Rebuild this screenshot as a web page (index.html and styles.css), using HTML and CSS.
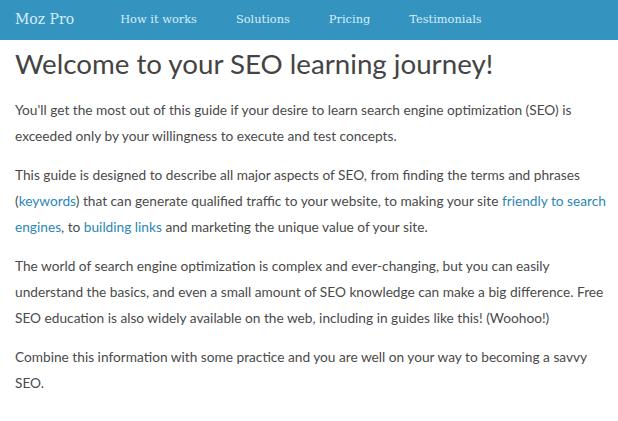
FILE: index.html
```html
<!DOCTYPE html>
<html lang="en">
<head>
    <meta charset="UTF-8">
    <meta name="viewport" content="width=device-width, initial-scale=1.0">
    <title>Welcome to your SEO learning journey</title>
    <link rel="stylesheet" href="styles.css">
</head>
<body>
    <!-- Top navigation -->
    <nav class="navbar">
        <a class="brand" href="#">Moz Pro</a>
        <ul class="nav-links">
            <li><a href="#">How it works</a></li>
            <li><a href="#">Solutions</a></li>
            <li><a href="#">Pricing</a></li>
            <li><a href="#">Testimonials</a></li>
        </ul>
    </nav>

    <main class="content">
        <h1>Welcome to your SEO learning journey!</h1>
        <p>You'll get the most out of this guide if your desire to learn search engine optimization (SEO) is exceeded only by your willingness to execute and test concepts.</p>
        <p>This guide is designed to describe all major aspects of SEO, from finding the terms and phrases (<a href="#">keywords</a>) that can generate qualified traffic to your website, to making your site <a href="#">friendly to search engines</a>, to <a href="#">building links</a> and marketing the unique value of your site.</p>
        <p>The world of search engine optimization is complex and ever-changing, but you can easily understand the basics, and even a small amount of SEO knowledge can make a big difference. Free SEO education is also widely available on the web, including in guides like this! (Woohoo!)</p>
        <p>Combine this information with some practice and you are well on your way to becoming a savvy SEO.</p>
    </main>
</body>
</html>
```

FILE: styles.css
```css
body, html {
    margin: 0;
    padding: 0;
    background-color: #fff;
    font-family: Lato, "Open Sans", sans-serif;
    color: #4a4a4a;
}
.navbar {
    height: 40px;
    background-color: #3593bf;
    display: flex;
    align-items: center;
    padding: 0 15px 2px;
    box-sizing: border-box;
    font-family: "DejaVu Serif", "Liberation Serif", serif;
}
.navbar a {
    color: #d4eefa;
    text-decoration: none;
}
.brand {
    font-size: 14px;
    margin-right: 27px;
}
.nav-links {
    display: flex;
    list-style: none;
    margin: 0;
    padding: 0;
}
.nav-links a {
    display: block;
    padding: 0 20px 0 19px;
    font-size: 11.4px;
}
.content {
    padding: 0 2px 0 15px;
}
h1 {
    margin: 4px 0 13px;
    font-size: 27.7px;
    font-weight: normal;
    color: #444;
    line-height: 40px;
}
p {
    margin: 0 0 13px;
    font-size: 13.7px;
    line-height: 26px;
}
p a {
    color: #2b87b5;
    text-decoration: none;
}
```
